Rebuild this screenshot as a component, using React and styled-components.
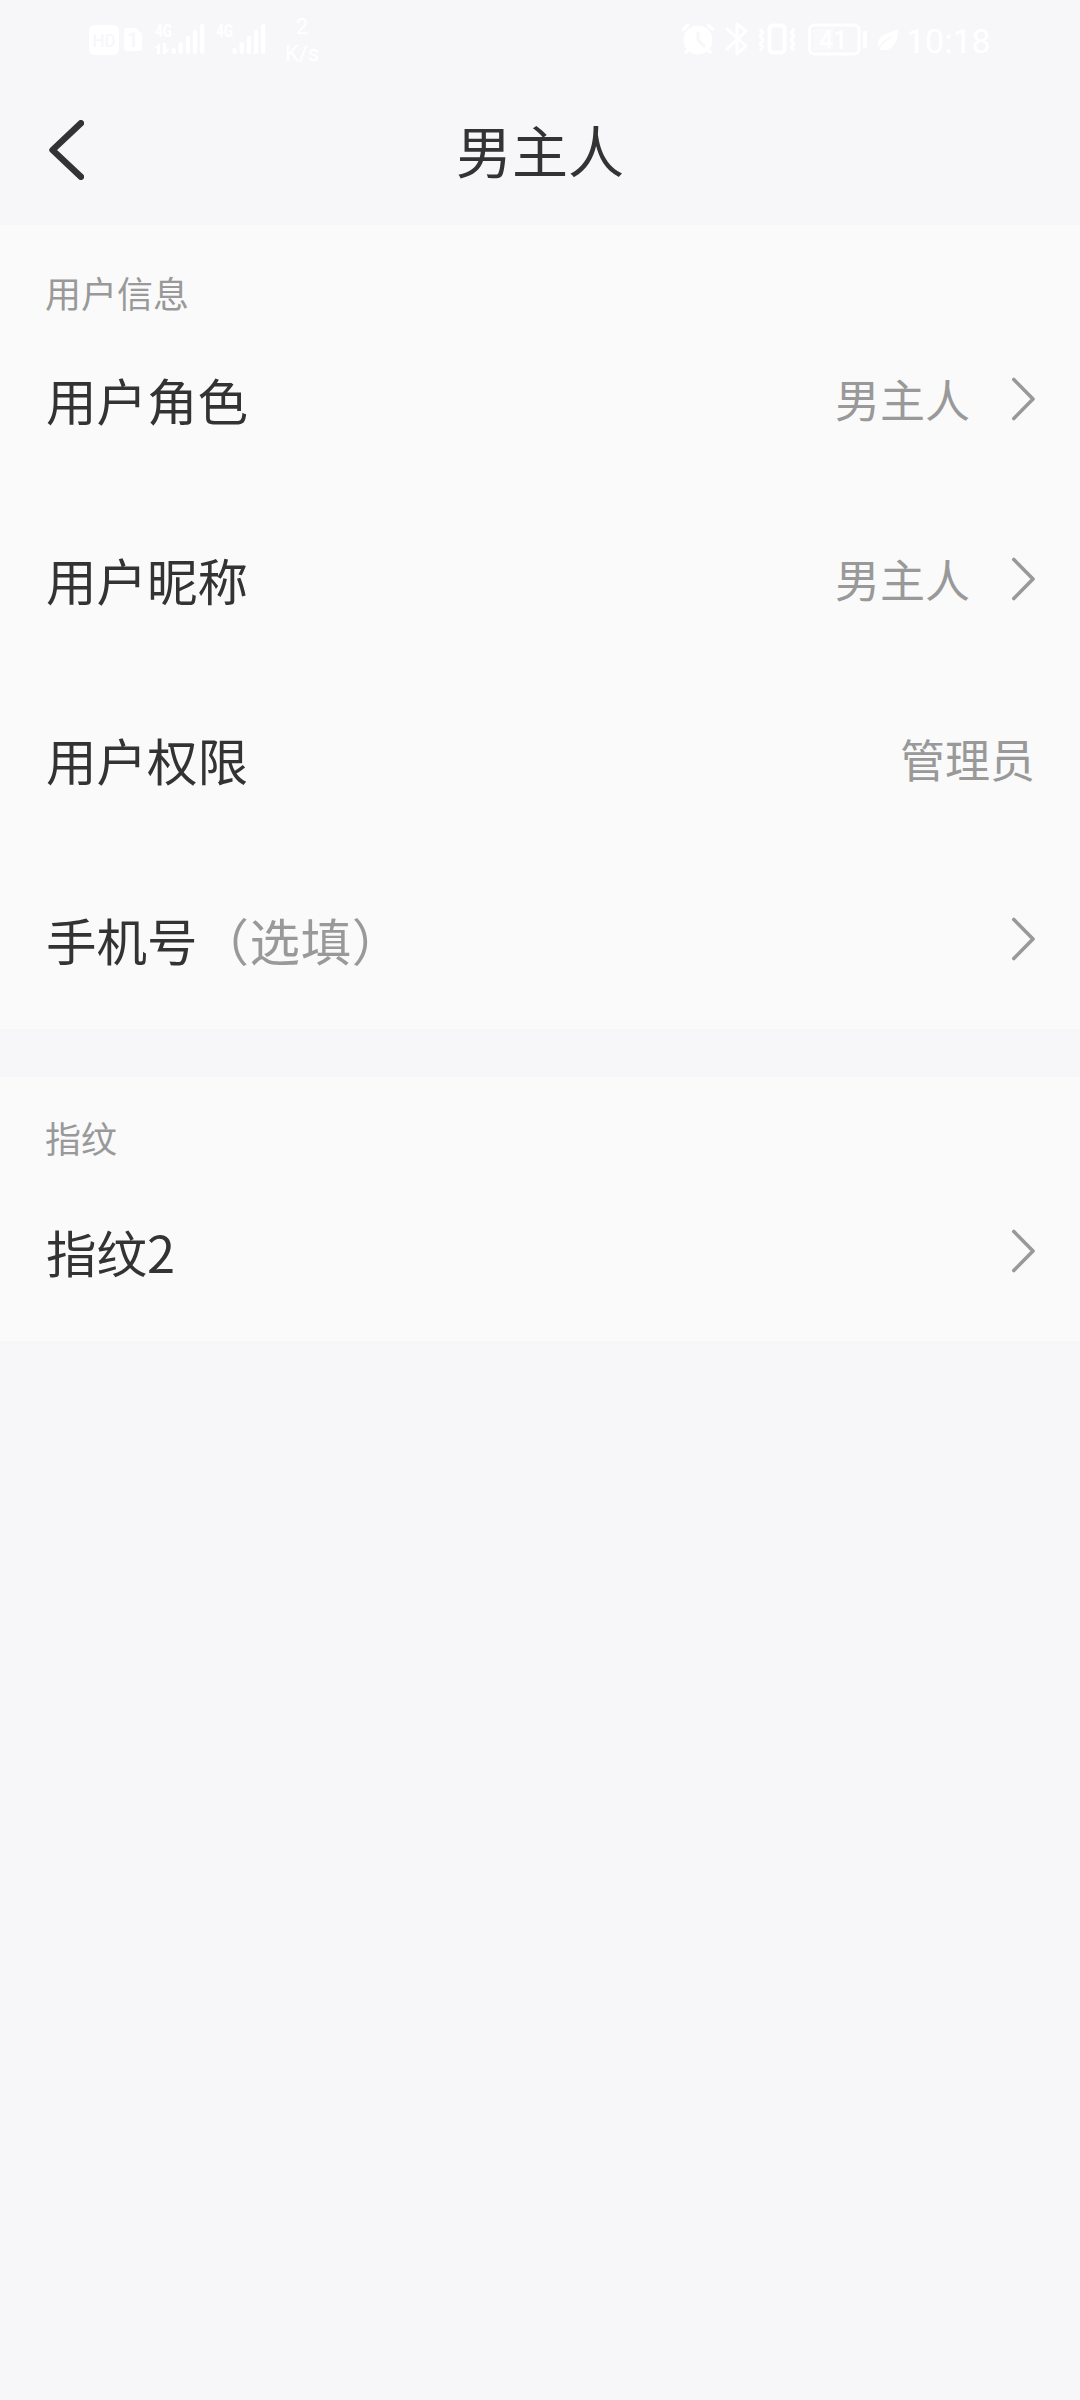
import React from 'react'
import styled, { createGlobalStyle } from 'styled-components'

const userRows = [
  { id: 'role', label: '用户角色', value: '男主人', arrow: true },
  { id: 'nickname', label: '用户昵称', value: '男主人', arrow: true },
  { id: 'permission', label: '用户权限', value: '管理员' },
  { id: 'phone', label: '手机号', hint: '（选填）', arrow: true }
]

const fingerprints = [{ id: 'fp2', label: '指纹2', arrow: true }]

const GlobalStyle = createGlobalStyle`
  * {
    box-sizing: border-box;
  }
  body {
    margin: 0;
    background-color: #f7f7fa;
    color: #333;
    font-family: 'Noto Sans CJK SC', sans-serif;
  }
`

const Page = styled.div`
  width: 1080px;
  min-height: 2400px;
  background-color: #f7f7fa;
`

const StatusBar = styled.div`
  display: flex;
  justify-content: space-between;
  height: 80px;
  padding: 0 86px 0 89px;
  color: #fff;
  svg {
    display: block;
  }
`

const StatusGroup = styled.div`
  display: flex;
`

const NetSpeed = styled.div`
  width: 50px;
  margin-left: 1px;
  padding-top: 13px;
  font-family: Roboto, sans-serif;
  font-size: 22px;
  line-height: 27px;
  text-align: center;
`

const Clock = styled.div`
  width: 88px;
  margin-left: -2px;
  font-family: Roboto, sans-serif;
  font-size: 34px;
  line-height: 82px;
  white-space: nowrap;
`

const Header = styled.header`
  display: grid;
  grid-template-columns: 135px 1fr 135px;
  align-items: center;
  height: 145px;
  padding-bottom: 5px;
`

const BackButton = styled.button`
  display: flex;
  height: 60px;
  padding: 0 0 0 49px;
  border: none;
  background: transparent;
`

const Title = styled.h1`
  margin: 0;
  padding-bottom: 2px;
  font-size: 56px;
  font-weight: 400;
  line-height: 84px;
  text-align: center;
`

const Section = styled.section`
  height: ${({ $height }) => $height}px;
  margin-bottom: 48px;
  padding-top: ${({ $top }) => $top}px;
  background-color: #fafafa;
`

const SectionTitle = styled.h2`
  height: ${({ $height }) => $height}px;
  margin: 0;
  padding-left: 45px;
  color: #999;
  font-size: 36px;
  font-weight: 400;
  line-height: 52px;
`

const Row = styled.div`
  display: flex;
  align-items: center;
  height: 180px;
  padding: 0 45px 0 46px;
`

const Label = styled.span`
  flex: 1;
  padding-bottom: 3px;
  font-size: 50.5px;
  line-height: 76px;
`

const Hint = styled.span`
  margin-left: 1px;
  color: #999;
  letter-spacing: 0.6px;
`

const Value = styled.span`
  padding-bottom: 2px;
  color: #999;
  font-size: 45px;
  line-height: 66px;
`

const Arrow = styled.svg`
  display: block;
  margin: 0 -1px 3px 40px;
`

function Cellular({ data }) {
  return (
    <svg width="61" height="80" viewBox="0 0 61 80" fill="#fff">
      <text
        x="1"
        y="37"
        fontFamily="Roboto, sans-serif"
        fontSize="18"
        fontWeight="700"
        textLength="17"
        lengthAdjust="spacingAndGlyphs"
      >
        4G
      </text>
      {data && <path d="M1 47l5-4v11H3v-6H1zM9 43h3v6h4l-5 5H9z" />}
      <rect x="17.500" y="48" width="4.300" height="6" rx="2" />
      <rect x="24.500" y="42" width="4.300" height="12" rx="2" />
      <rect x="31.700" y="36" width="4.300" height="18" rx="2" />
      <rect x="38.900" y="30" width="4.300" height="24" rx="2" />
      <rect x="46.100" y="24" width="4.300" height="30" rx="2" />
    </svg>
  )
}

function SimBadges() {
  return (
    <svg width="65" height="80" viewBox="0 0 65 80" fill="#fff">
      <rect x="0" y="25" width="30" height="30" rx="6" />
      <path d="M38 28h9l6 6v14q0 3-3 3H38q-3 0-3-3V31q0-3 3-3z" />
      <g fill="#f7f7fa" fontFamily="Roboto, sans-serif" fontWeight="500">
        <text x="3.500" y="47" fontSize="19" textLength="23" lengthAdjust="spacingAndGlyphs">
          HD
        </text>
        <text x="38" y="47" fontSize="20" fontWeight="700">
          1
        </text>
      </g>
    </svg>
  )
}

// alarm, bluetooth, vibrate, battery, power saving
function DeviceIcons() {
  return (
    <svg width="227" height="80" viewBox="0 0 227 80" fill="none" stroke="#fff">
      <circle cx="17" cy="40" r="14.500" fill="#fff" stroke="none" />
      <path d="M2.500 29l4-3.500M31.500 29l-4-3.500M5 52l4-4M29 52l-4-4" strokeWidth="3.500" strokeLinecap="round" />
      <path d="M17 33v7l6 6" stroke="#f7f7fa" strokeWidth="3" strokeLinecap="round" />
      <path d="M46 29l19 17-9 8V24l9 7-19 18" strokeWidth="3" strokeLinecap="round" strokeLinejoin="round" />
      <rect x="88.500" y="25.500" width="15" height="27" rx="3.500" strokeWidth="4" />
      <path
        d="M79 29l3 4-3 3 3 4-3 4 3 3-3 3M113 29l-3 4 3 3-3 4 3 4-3 3 3 3"
        strokeWidth="3"
        strokeLinejoin="round"
      />
      <rect x="128.500" y="25" width="49.500" height="29" rx="5" strokeWidth="3" />
      <rect x="132" y="29" width="20" height="21" rx="2" fill="#f9f9fb" stroke="none" />
      <path d="M184 33v13" strokeWidth="4" strokeLinecap="round" />
      <text
        x="138"
        y="48.500"
        fontFamily="Roboto, sans-serif"
        fontSize="25"
        fontWeight="500"
        fill="#fff"
        stroke="none"
      >
        41
      </text>
      <path
        d="M217 29c-7 4-20 5-20 15 0 4 1 6 4 6 12 1 16-9 16-21z"
        fill="#fff"
        stroke="none"
      />
      <path d="M196 51q5-9 14-14" stroke="#f7f7fa" strokeWidth="1.500" />
    </svg>
  )
}

function ListRow({ label, hint, value, arrow }) {
  return (
    <Row>
      <Label>
        {label}
        {hint && <Hint>{hint}</Hint>}
      </Label>
      {value && <Value>{value}</Value>}
      {arrow && (
        <Arrow width="26" height="44" viewBox="0 0 26 44">
          <path
            d="M3.800 2.500L23 22L3.800 41.500"
            fill="none"
            stroke="#999"
            strokeWidth="3.600"
            strokeLinecap="round"
            strokeLinejoin="round"
          />
        </Arrow>
      )}
    </Row>
  )
}

export default function App() {
  return (
    <Page>
      <GlobalStyle />
      <StatusBar>
        <StatusGroup>
          <SimBadges />
          <Cellular data />
          <Cellular />
          <NetSpeed>
            2<br />
            K/s
          </NetSpeed>
        </StatusGroup>
        <StatusGroup>
          <DeviceIcons />
          <Clock>10:18</Clock>
        </StatusGroup>
      </StatusBar>
      <Header>
        <BackButton type="button" aria-label="返回">
          <svg width="35" height="60" viewBox="0 0 35 60">
            <path
              d="M32 3.200L3.500 30L32 56.800"
              fill="none"
              stroke="#333"
              strokeWidth="6.400"
              strokeLinecap="round"
              strokeLinejoin="round"
            />
          </svg>
        </BackButton>
        <Title>男主人</Title>
      </Header>
      <Section $height={804} $top={41}>
        <SectionTitle $height={44}>用户信息</SectionTitle>
        {userRows.map(row => (
          <ListRow key={row.id} {...row} />
        ))}
      </Section>
      <Section $height={264} $top={34}>
        <SectionTitle $height={51}>指纹</SectionTitle>
        {fingerprints.map(row => (
          <ListRow key={row.id} {...row} />
        ))}
      </Section>
    </Page>
  )
}
